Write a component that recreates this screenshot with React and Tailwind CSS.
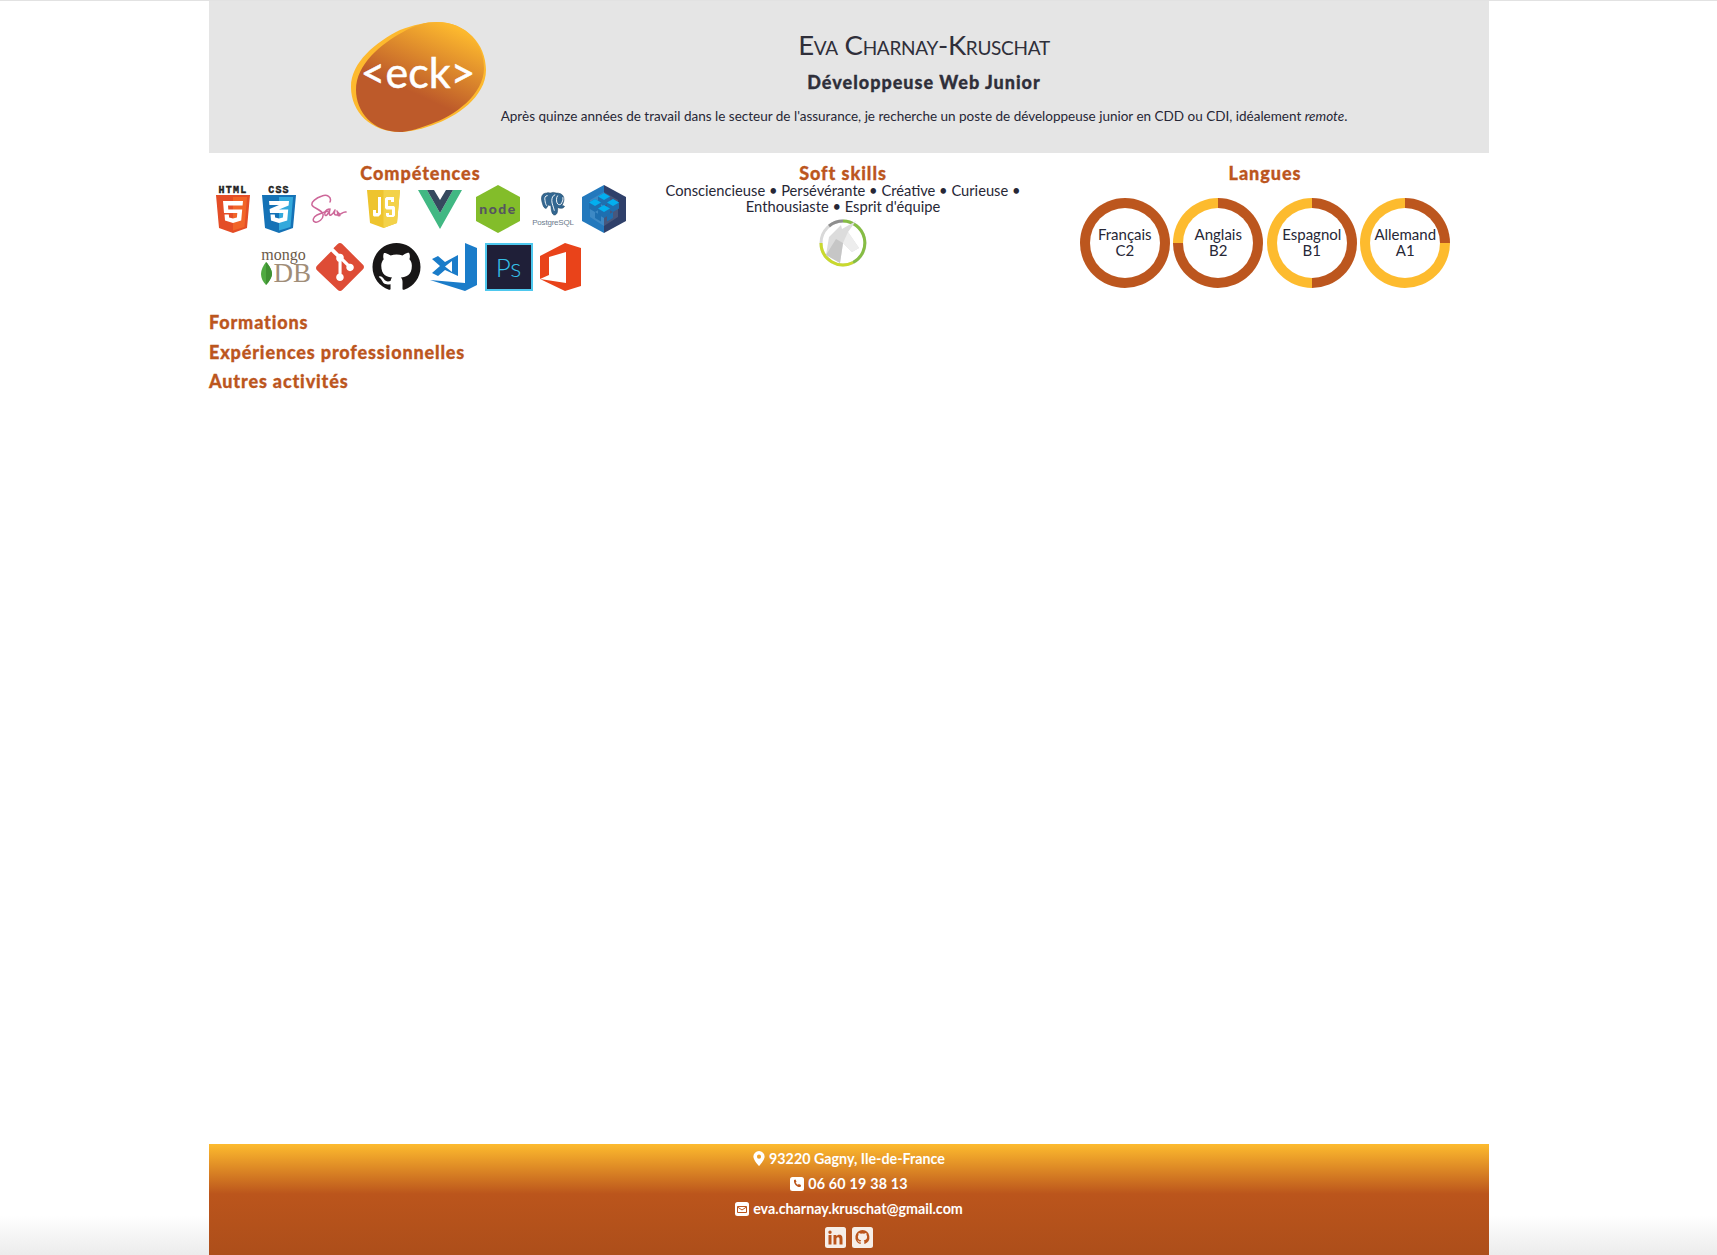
import React from "react";

const Html = () => (
  <svg viewBox="0 0 34 48" className="w-[34px] h-[48px] overflow-visible">
    <text x="17" y="7.500" textAnchor="middle" fontFamily="Liberation Mono" fontWeight="700" fontSize="10" letterSpacing="1.200" stroke="#222" strokeWidth="0.4" fill="#222">HTML</text>
    <path d="M0 10h34l-3 33-14 5-14-5z" fill="#e44d26" />
    <path d="M17 12v33.500l11.500-3.500 2.600-30z" fill="#f16529" />
    <path d="M7 16h20l-.4 4.500H12l.3 4h13.900l-1 11L17 38l-8-2.500-.5-6h4.300l.3 3 3.900 1 3.900-1 .4-4.500H8z" fill="#fff" />
  </svg>
);
const Css = () => (
  <svg viewBox="0 0 34 48" className="w-[34px] h-[48px] overflow-visible">
    <text x="17" y="7.500" textAnchor="middle" fontFamily="Liberation Mono" fontWeight="700" fontSize="10" letterSpacing="1.200" stroke="#222" strokeWidth="0.4" fill="#222">CSS</text>
    <path d="M0 10h34l-3 33-14 5-14-5z" fill="#1572b6" />
    <path d="M17 12v33.500l11.500-3.500 2.600-30z" fill="#33a9dc" />
    <path d="M7 16h20l-.4 4.500-9.600 4h9.200l-1 11L17 38l-8-2.500-.5-6h4.300l.3 3 3.900 1 3.900-1 .4-4.500H8l-.4-4 9.400-4H7.400z" fill="#fff" />
  </svg>
);
const Sass = () => (
  <svg viewBox="0 0 37 30" className="w-[37px] h-[30px]" fill="none" stroke="#cd6799" strokeWidth="1.500" strokeLinecap="round" strokeLinejoin="round">
    <path d="M20 8C22 3 17 0 12 2C6 4 1 8 2 11C3 14 12 16 13 20C14 25 8 29 5 28C2 27 3 23 7 21C11 19 15 18 18 17" />
    <path d="M19 15C16 15 14 19 15 21C16 23 19 19 20 15C19 19 19 22 21 21C23 20 24 18 25 16C24 19 24 21 26 21C28 21 28 19 27 17C28 19 30 20 30 21C30 22 28 22 28 21C31 21 33 17 36 18" />
  </svg>
);
const Js = () => (
  <svg viewBox="0 0 33 38" className="w-[33px] h-[38px]">
    <path d="M0 0h33l-3 33-13.500 5L3 33z" fill="#eec42e" />
    <path d="M16.500 0H33l-3 33-13.500 5z" fill="#f3d24a" />
    <path d="M14 7v17l-2.500 2.500H7l-1-1V20h3v3h2V7zM29 7h-9.500L18 8.500V18l1.500 1.500H25V25h-3v-2h-3v2.500l1 1.500h6.500l1.500-1.500V17.500L27 16h-6V10h3v2h3V7z" fill="#fff" />
  </svg>
);
const Vue = () => (
  <svg viewBox="0 0 44 39" className="w-[44px] h-[39px]">
    <path d="M0 0h9l13 23L35 0h9L22 39z" fill="#41b883" />
    <path d="M9 0h7l6 10 6-10h7L22 23z" fill="#35495e" />
  </svg>
);
const Node = () => (
  <svg viewBox="0 0 44 48" className="w-[44px] h-[48px]">
    <path d="M22 0l22 12v24L22 48 0 36V12z" fill="#83bd2a" />
    <text x="22" y="29" textAnchor="middle" fontFamily="Lato" fontWeight="900" fontSize="14" letterSpacing="1.500" fill="#55555f">node</text>
  </svg>
);
const Pg = () => (
  <div className="w-[39px] h-[38px] flex flex-col items-center">
    <svg viewBox="0 0 32 28" className="w-[27px] h-[28px]">
      <path d="M8 1C3 1 1 5 2 10c1 4 2 8 4 9 2 1 3-2 4-4 1 1 2 1 3 1 0 4 1 11 4 11 3 0 4-3 4-9 4 2 7 1 8-1 0-1-2-1-3-1 2-4 3-7 2-10-1-4-5-5-9-5-2-1-5-1-6 0-2 0-3-1-5 0z" fill="#336791" stroke="#234a6a" strokeWidth="0.700" />
      <path d="M9 4C6 4 5 7 6 10c0 2 1 5 2 6M18 3c-3 1-4 4-4 7 0 4 2 7 3 12M27 6c1 3-1 6-2 8-1 1-3 1-4 0-2-2-2-8 0-10" fill="none" stroke="#fff" strokeWidth="1.100" />
    </svg>
    <span className="font-['Liberation_Sans',sans-serif] text-[8px] leading-[9px] tracking-[-0.2px] text-[#6b7b8c]">PostgreSQL</span>
  </div>
);
const Seq = () => (
  <svg viewBox="0 0 44 48" className="w-[44px] h-[48px]">
    <path d="M22 0l22 12v24L22 48z" fill="#2f406a" />
    <path d="M22 0L0 12v24l22 12z" fill="#2379bd" />
    <path d="M22 7l14 8v17l-14 9-14-9V15z" fill="#fff" opacity="0.12" />
    <path d="M22 8l6 3.500v6L22 21l-6-3.500v-6z" fill="#1e6fb0" />
    <path d="M22 8l6 3.500-6 3.500-6-3.500z" fill="#03afef" />
    <path d="M31 14l6 3.500v6L31 27l-6-3.500v-6z" fill="#1e6fb0" />
    <path d="M31 14l6 3.500-6 3.500-6-3.500z" fill="#03afef" />
    <path d="M13 14l6 3.500v6L13 27l-6-3.500v-6z" fill="#1e6fb0" />
    <path d="M13 14l6 3.500-6 3.500-6-3.500z" fill="#03afef" />
    <path d="M22 20l6 3.500v6L22 33l-6-3.500v-6z" fill="#1e6fb0" />
    <path d="M22 20l6 3.500-6 3.500-6-3.500z" fill="#03afef" />
    <path d="M31 27l-6 3.500v6l6-3.500zM13 27l6 3.500v6l-6-3.500z" fill="#1e6fb0" />
  </svg>
);
const Mongo = () => (
  <div className="w-[46px] h-[38px] flex flex-col font-['Liberation_Serif',serif]">
    <span className="text-center text-[16px] leading-[13px] text-[#6b5a4a]">mongo</span>
    <div className="flex items-center">
      <svg viewBox="0 0 11 23" className="w-[11px] h-[23px] shrink-0">
        <path d="M5 0c4 4 6 9 6 12s-3 8-6 11c-3-3-5-7-5-11S2 4 5 0z" fill="#4faa41" />
        <path d="M5 0c4 4 6 9 6 12s-3 8-6 11z" fill="#3f9133" />
      </svg>
      <span className="ml-[2px] text-[27px] leading-[25px] text-[#a08d78]">DB</span>
    </div>
  </div>
);
const Git = () => (
  <svg viewBox="0 0 48 48" className="w-[48px] h-[48px]">
    <path d="M47 21.800L26.200 1c-1.300-1.300-3.200-1.300-4.500 0l-4.300 4.300 5.500 5.500c1.300-.4 2.800-.1 3.800.9 1 1 1.300 2.500.9 3.800l5.300 5.300c1.300-.4 2.800-.1 3.800.9 1.500 1.500 1.500 3.800 0 5.300s-3.800 1.500-5.300 0c-1.100-1.100-1.400-2.800-.8-4.100l-5-5v13c.4.200.7.400 1 .7 1.500 1.500 1.500 3.800 0 5.300s-3.800 1.500-5.300 0-1.500-3.800 0-5.300c.4-.4.800-.6 1.200-.8V18.700c-.4-.2-.9-.5-1.200-.8-1.100-1.100-1.400-2.800-.8-4.100l-5.400-5.400L1 22.700c-1.300 1.300-1.300 3.200 0 4.500L21.800 47c1.300 1.300 3.200 1.300 4.500 0L47 26.300c1.300-1.300 1.300-3.200 0-4.500z" fill="#de4c36" />
  </svg>
);
const Github = () => (
  <svg viewBox="0 0 16 16" className="w-[49px] h-[48px]">
    <path fill="#181616" d="M8 0C3.580 0 0 3.580 0 8c0 3.540 2.290 6.530 5.470 7.590.4.070.55-.17.55-.38 0-.19-.010-.82-.010-1.490-2.010.37-2.530-.49-2.690-.94-.09-.23-.48-.94-.82-1.130-.28-.15-.68-.52-.01-.53.63-.010 1.080.58 1.230.82.720 1.210 1.870.87 2.330.66.070-.52.280-.87.510-1.070-1.780-.2-3.640-.89-3.640-3.950 0-.87.310-1.590.820-2.150-.080-.2-.360-1.020.080-2.120 0 0 .670-.210 2.200.820.640-.180 1.320-.270 2-.270s1.360.090 2 .270c1.530-1.040 2.200-.820 2.200-.820.440 1.100.160 1.920.080 2.120.510.560.820 1.270.820 2.150 0 3.070-1.870 3.750-3.650 3.950.290.250.540.730.540 1.480 0 1.070-.010 1.930-.010 2.200 0 .210.150.460.550.380A8.010 8.010 0 0 0 16 8c0-4.420-3.580-8-8-8z" />
  </svg>
);
const Code = () => (
  <svg viewBox="0 0 47 48" className="w-[47px] h-[48px]">
    <path d="M35 0l12 5v37l-12 6L0 37l35 3z" fill="#1a7cc9" />
    <path fillRule="evenodd" d="M28 12v21l-13-6-7 6-6-3 8-7-8-7 6-3 7 6zM22 18l-7 5.500 7 5.500z" fill="#1a7cc9" />
  </svg>
);
const Ps = () => (
  <div className="w-[48px] h-[48px] bg-[#1f1f38] border-2 border-[#4ec8ee] flex items-center justify-center font-['Lato',sans-serif] font-light text-[26px] leading-none text-[#35bfe8]">
    Ps
  </div>
);
const Office = () => (
  <svg viewBox="0 0 41 48" className="w-[41px] h-[48px]">
    <path d="M0 13L25 0l16 5v38l-16 5L0 36l26 4V9L9 14v18L0 36z" fill="#e9431a" />
  </svg>
);

const Ring = ({ label, level, deg }) => (
  <div
    className="w-[90px] h-[90px] rounded-full flex items-center justify-center"
    style={{ background: `conic-gradient(#bc561e 0 ${deg}deg, #fdbb2e ${deg}deg 360deg)` }}
  >
    <div className="w-[70px] h-[70px] rounded-full bg-white pb-[2px] flex flex-col items-center justify-center text-[15px] leading-[16px] text-[#272736]">
      <span>{label}</span>
      <span>{level}</span>
    </div>
  </div>
);

const Heading = ({ children }) => (
  <h2 className="text-[18px] leading-[20px] font-black tracking-[0.950px] [-webkit-text-stroke:0.3px_#bc561e] text-[#bc561e]">{children}</h2>
);

const Unicorn = () => (
  <svg viewBox="0 0 48 48" className="w-[48px] h-[48px]">
    <g fill="none" strokeWidth="3">
      <circle cx="24" cy="24" r="22" stroke="#d9d9d9" />
      <path d="M24 2a22 22 0 0 1 10 41.500" stroke="#86bd44" />
      <path d="M34 43.500A22 22 0 0 1 2 24" stroke="#c9d92e" />
      <path d="M10 7a22 22 0 0 1 14-5" stroke="#8e8e8e" />
    </g>
    <path d="M37 2L29 13l11 16-7 4-9-9-3 20-14-8 3-18 12-12 1 4z" fill="#dcdcdc" />
    <path d="M17 20l7 4-3 20-14-8z" fill="#c6c6c6" />
    <path d="M29 13l11 16-7 4-9-9z" fill="#ededed" />
  </svg>
);

export default function App() {
  return (
    <div className="min-h-screen flex flex-col items-center border-t border-[#e2e2e2] pr-[19px] bg-[linear-gradient(to_bottom,#ffffff_96.800%,#ececec_100%)] font-['Lato',sans-serif] text-[#272736]">
      <div className="w-[1280px] flex-1 flex flex-col">
        <header className="h-[152px] bg-[#e5e5e5] flex pl-[142px] pt-[21px]">
          <svg viewBox="0 0 135 110" className="w-[135px] h-[110px] shrink-0">
            <defs>
              <linearGradient id="eck" x1="0.78" y1="0.05" x2="0.35" y2="0.85">
                <stop offset="0" stopColor="#fdb92e" />
                <stop offset="0.75" stopColor="#bd5a2a" />
                <stop offset="1" stopColor="#bd5a2a" />
              </linearGradient>
            </defs>
            <path d="M86 0C115 0 135 22 135 48C135 75 105 95 82 103C65 109 55 110 49 110C20 110 0 90 0 65C0 40 25 20 49 8C62 3 75 0 86 0Z" fill="#fdb92e" />
            <path d="M86 0C113 0 133 20 133 46C133 73 103 94 80 102C64 108 55 110 49 110C22 110 5 90 5 68C5 42 30 22 52 10C64 3 75 0 86 0Z" fill="url(#eck)" />
            <text x="67" y="66" textAnchor="middle" fontFamily="Lato" fontSize="43" stroke="#fff" strokeWidth="0.5" fill="#fff">{"<eck>"}</text>
          </svg>
          <div className="ml-[15px] w-[846px] -mt-[21px] flex flex-col items-center whitespace-nowrap">
            <h1 className="mt-[28px] text-[27.500px] leading-[32px] [font-variant:small-caps] tracking-[-0.3px] text-[#2f2f3a]">Eva Charnay-Kruschat</h1>
            <p className="mt-[10px] text-[18px] leading-[22px] font-black tracking-[1px] [-webkit-text-stroke:0.3px_#2f2f3a] text-[#2f2f3a]">Développeuse Web Junior</p>
            <p className="mt-[14px] text-[13.500px] leading-[18px] text-[#272736]">
              Après quinze années de travail dans le secteur de l'assurance, je recherche un poste de développeuse junior en CDD ou CDI, idéalement <em>remote</em>.
            </p>
          </div>
        </header>

        <section className="flex pt-[10px]">
          <div className="w-[423px] flex flex-col items-center">
            <Heading>Compétences</Heading>
            <div className="w-[410px] flex flex-col items-center -mt-[1px]">
              <div className="w-full h-[54px] flex items-center">
                <Html />
                <div className="ml-[12px]"><Css /></div>
                <div className="ml-[14px]"><Sass /></div>
                <div className="ml-[20px]"><Js /></div>
                <div className="ml-[18px]"><Vue /></div>
                <div className="ml-[14px]"><Node /></div>
                <div className="ml-[14px]"><Pg /></div>
                <div className="ml-[9px]"><Seq /></div>
              </div>
              <div className="w-full h-[48px] mt-[7px] flex items-center justify-center">
                <Mongo />
                <div className="ml-[9px]"><Git /></div>
                <div className="ml-[8px]"><Github /></div>
                <div className="ml-[9px]"><Code /></div>
                <div className="ml-[8px]"><Ps /></div>
                <div className="ml-[7px]"><Office /></div>
              </div>
            </div>
          </div>
          <div className="w-[422px] flex flex-col items-center">
            <Heading>Soft skills</Heading>
            <p className="-mt-[1px] w-[380px] text-center text-[14.700px] leading-[16px] text-[#272736]">
              Consciencieuse • Persévérante • Créative • Curieuse • Enthousiaste • Esprit d'équipe
            </p>
            <div className="mt-[5px]"><Unicorn /></div>
          </div>
          <div className="w-[422px] flex flex-col items-center">
            <Heading>Langues</Heading>
            <div className="mt-[15px] flex gap-[3.500px]">
              <Ring label="Français" level="C2" deg={360} />
              <Ring label="Anglais" level="B2" deg={270} />
              <Ring label="Espagnol" level="B1" deg={180} />
              <Ring label="Allemand" level="A1" deg={90} />
            </div>
          </div>
        </section>

        <nav className="mt-[20px] flex flex-col gap-[7px] text-[18px] leading-[22.500px] font-black tracking-[0.850px] [-webkit-text-stroke:0.3px_#bc561e] text-[#bc561e]">
          <a>Formations</a>
          <a>Expériences professionnelles</a>
          <a>Autres activités</a>
        </nav>

        <footer className="mt-auto h-[111px] bg-gradient-to-b from-[#fdbb2e] via-[#bb551c] via-45% to-[#ad4e1a] flex flex-col items-center text-[14.300px] font-bold text-white">
          <div className="h-[25px] mt-[2px] flex items-center gap-[4px]">
            <svg viewBox="0 0 12 16" className="w-[12px] h-[15px]"><path fill="#fff" fillRule="evenodd" d="M6 0a6 6 0 0 0-6 6c0 3.500 6 10 6 10s6-6.500 6-10a6 6 0 0 0-6-6zm0 8.200a2.200 2.200 0 1 1 0-4.400 2.200 2.200 0 0 1 0 4.400z" /></svg>
            <span>93220 Gagny, Ile-de-France</span>
          </div>
          <div className="h-[25px] flex items-center gap-[4px]">
            <svg viewBox="0 0 14 14" className="w-[14px] h-[14px]"><rect width="14" height="14" rx="2.500" fill="#fff" /><path fill="#bb551c" d="M4 3l1.500-.5 1 2.200-.8.8c.4 1 1.300 1.900 2.300 2.300l.8-.8 2.200 1L10.500 10C7 10.500 3.500 7 4 3z" /></svg>
            <span className="tracking-[0.2px]">06 60 19 38 13</span>
          </div>
          <div className="h-[25px] flex items-center gap-[4px]">
            <svg viewBox="0 0 14 14" className="w-[14px] h-[14px]"><rect width="14" height="14" rx="2.500" fill="#fff" /><path fill="none" stroke="#bb551c" strokeWidth="1" d="M2.500 4.500h9v6h-9zM2.500 5l4.500 3 4.500-3" /></svg>
            <span>eva.charnay.kruschat@gmail.com</span>
          </div>
          <div className="mt-[6px] flex gap-[6px]">
            <svg viewBox="0 0 21 21" className="w-[21px] h-[21px]"><rect width="21" height="21" rx="2.500" fill="#f6eee8" /><path fill="#bb551c" d="M3.500 8h3v9.500h-3zM5 3.500a1.700 1.700 0 1 1 0 3.400 1.700 1.700 0 0 1 0-3.400zM8.500 8h2.900v1.300c.5-.9 1.600-1.500 2.900-1.500 2.700 0 3.200 1.700 3.200 4.100v5.600h-3v-5c0-1.200 0-2.300-1.500-2.300s-1.600 1.100-1.600 2.300v5h-2.900z" /></svg>
            <svg viewBox="0 0 21 21" className="w-[21px] h-[21px]"><rect width="21" height="21" rx="2.500" fill="#f6eee8" /><path fill="#bb551c" d="M10.500 3a7.200 7.200 0 0 0-2.300 14c.4.100.5-.2.500-.4v-1.300c-2 .4-2.400-.9-2.400-.9-.3-.8-.8-1.100-.8-1.100-.7-.4 0-.4 0-.4.700 0 1.100.8 1.100.8.600 1.100 1.700.8 2.100.6.100-.5.300-.8.500-1-1.600-.2-3.300-.8-3.300-3.500 0-.8.300-1.400.7-1.900-.1-.2-.3-.9.100-1.900 0 0 .6-.2 2 .7a7 7 0 0 1 3.600 0c1.400-.9 2-.7 2-.7.400 1 .2 1.700.1 1.900.5.500.7 1.100.7 1.900 0 2.800-1.700 3.400-3.300 3.500.3.200.5.700.5 1.300v1.900c0 .2.100.4.500.4A7.200 7.200 0 0 0 10.500 3z" /></svg>
          </div>
        </footer>
      </div>
    </div>
  );
}
